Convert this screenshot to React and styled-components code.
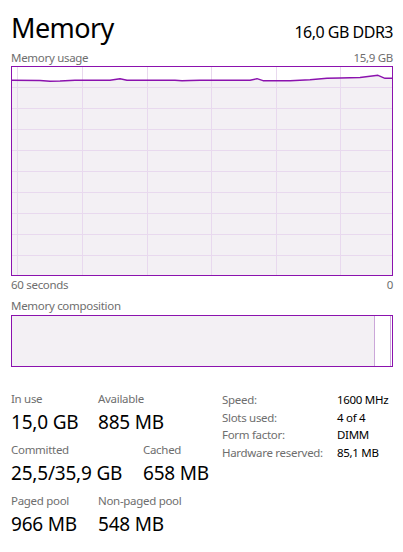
import React from "react";
import styled, { createGlobalStyle } from "styled-components";

const Global = createGlobalStyle`
  html, body { margin: 0; padding: 0; background: #ffffff; }
  body { font-family: "Segoe UI", "Noto Sans", "Open Sans", sans-serif; }
`;

const PURPLE = "#8b12ae";
const FILL = "#f3f0f4";
const GRID = "#e8d9ee";
const GREY = "#6e6e6e";

const Page = styled.div`
  width: 403px;
  height: 552px;
  box-sizing: border-box;
  padding: 12px 10px 0 11px;
  display: flex;
  flex-direction: column;
  overflow: hidden;
`;

const Header = styled.div`
  display: flex;
  justify-content: space-between;
  align-items: baseline;
  height: 32px;
`;

const Title = styled.h1`
  margin: 0;
  font-size: 27px;
  line-height: 32px;
  font-weight: 400;
  color: #000;
  letter-spacing: -0.6px;
`;

const Spec = styled.div`
  font-size: 16px;
  line-height: 32px;
  color: #000;
  letter-spacing: -0.5px;
`;

const CaptionRow = styled.div`
  display: flex;
  justify-content: space-between;
  font-size: 11.5px;
  line-height: 16px;
  color: ${GREY};
  margin-top: ${(p) => p.$mt || 0}px;
  letter-spacing: -0.3px;
`;

const ChartBox = styled.div`
  margin-top: ${(p) => p.$mt || 0}px;
  height: ${(p) => p.$h}px;
  border: 1px solid ${PURPLE};
  box-sizing: border-box;
  background: #fff;
  display: flex;
`;

const ChartSvg = styled.svg`
  display: block;
  width: 100%;
  height: 100%;
`;

const Segment = styled.div`
  height: 100%;
  width: ${(p) => p.$w}px;
  flex: ${(p) => (p.$grow ? 1 : "none")};
  background: ${(p) => p.$bg};
  border-right: ${(p) => (p.$sep ? "1px solid #cba7d9" : "none")};
`;

const Stats = styled.div`
  display: flex;
  margin-top: 24px;
`;

const LeftStats = styled.div`
  width: 211px;
  display: flex;
  flex-direction: column;
  gap: 8px;
`;

const StatRow = styled.div`
  display: flex;
`;

const Stat = styled.div`
  width: ${(p) => (p.$w ? `${p.$w}px` : "auto")};
  display: flex;
  flex-direction: column;
  gap: 3px;
`;

const StatLabel = styled.div`
  font-size: 11.5px;
  line-height: 16px;
  color: ${GREY};
  white-space: nowrap;
  letter-spacing: -0.3px;
`;

const StatValue = styled.div`
  font-size: 19px;
  line-height: 24px;
  color: #000;
  white-space: nowrap;
  letter-spacing: -0.2px;
`;

const Props = styled.dl`
  margin: 0;
  display: grid;
  grid-template-columns: 115px auto;
  grid-auto-rows: 17.7px;
  align-content: start;
`;

const PropKey = styled.dt`
  margin: 0;
  font-size: 11.5px;
  line-height: 17.7px;
  color: ${GREY};
  white-space: nowrap;
  letter-spacing: -0.3px;
`;

const PropVal = styled.dd`
  margin: 0;
  font-size: 11.5px;
  line-height: 17.7px;
  color: #000;
  white-space: nowrap;
  letter-spacing: -0.3px;
`;

const W = 380;
const H = 208;
const pts = [
  [-1, 13.3], [28, 13.5], [38, 14.3], [48, 14], [63, 13.2], [98, 13.2],
  [108, 11.7], [115, 13.2], [163, 13.2], [170, 13.7], [178, 13.5], [188, 13.3],
  [238, 13.3], [245, 11.7], [251, 13.7], [278, 13.7], [298, 12.8], [315, 11.3],
  [328, 11], [348, 10.5], [366, 8.3], [373, 11.3], [381, 11.3],
];
const vLines = [5, 70, 135, 199, 264, 328];
const hLines = [20, 41, 62, 83, 104, 125, 146, 167, 188];

function UsageChart() {
  const line = pts.map((p) => p.join(",")).join(" ");
  const area = `${line} ${W + 1},${H + 1} -1,${H + 1}`;
  return (
    <ChartSvg viewBox={`0 0 ${W} ${H}`} preserveAspectRatio="none">
      <polygon points={area} fill={FILL} />
      {vLines.map((x) => (
        <line key={`v${x}`} x1={x + 0.5} x2={x + 0.5} y1={0} y2={H} stroke={GRID} strokeWidth="1" />
      ))}
      {hLines.map((y) => (
        <line key={`h${y}`} x1={0} x2={W} y1={y + 0.5} y2={y + 0.5} stroke={GRID} strokeWidth="1" />
      ))}
      <polyline points={line} fill="none" stroke={PURPLE} strokeWidth="1.4" strokeLinejoin="round" />
    </ChartSvg>
  );
}

const composition = [
  { w: 362, bg: FILL, sep: true },
  { w: 15, bg: "#ffffff", sep: true },
  { grow: true, bg: "#ffffff" },
];

const rows = [
  [
    { label: "In use", value: "15,0 GB", w: 87 },
    { label: "Available", value: "885 MB" },
  ],
  [
    { label: "Committed", value: "25,5/35,9 GB", w: 132 },
    { label: "Cached", value: "658 MB" },
  ],
  [
    { label: "Paged pool", value: "966 MB", w: 87 },
    { label: "Non-paged pool", value: "548 MB" },
  ],
];

const props = [
  ["Speed:", "1600 MHz"],
  ["Slots used:", "4 of 4"],
  ["Form factor:", "DIMM"],
  ["Hardware reserved:", "85,1 MB"],
];

export default function App() {
  return (
    <>
      <Global />
      <Page>
        <Header>
          <Title>Memory</Title>
          <Spec>16,0 GB DDR3</Spec>
        </Header>
        <CaptionRow $mt={6}>
          <span>Memory usage</span>
          <span>15,9 GB</span>
        </CaptionRow>
        <ChartBox $mt={0} $h={210}>
          <UsageChart />
        </ChartBox>
        <CaptionRow $mt={1}>
          <span>60 seconds</span>
          <span>0</span>
        </CaptionRow>
        <CaptionRow $mt={5}>
          <span>Memory composition</span>
        </CaptionRow>
        <ChartBox $mt={1} $h={52}>
          {composition.map((s, i) => (
            <Segment key={i} $w={s.w} $grow={s.grow} $bg={s.bg} $sep={s.sep} />
          ))}
        </ChartBox>
        <Stats>
          <LeftStats>
            {rows.map((r, i) => (
              <StatRow key={i}>
                {r.map((s) => (
                  <Stat key={s.label} $w={s.w}>
                    <StatLabel>{s.label}</StatLabel>
                    <StatValue>{s.value}</StatValue>
                  </Stat>
                ))}
              </StatRow>
            ))}
          </LeftStats>
          <Props>
            {props.map(([k, v]) => (
              <React.Fragment key={k}>
                <PropKey>{k}</PropKey>
                <PropVal>{v}</PropVal>
              </React.Fragment>
            ))}
          </Props>
        </Stats>
      </Page>
    </>
  );
}
